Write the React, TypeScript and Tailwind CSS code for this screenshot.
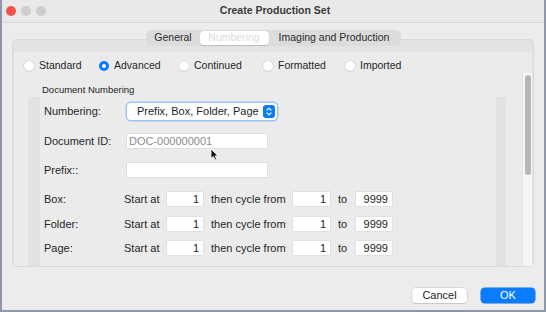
import { ReactNode } from "react"

function Radio({ label, checked, w }: { label: string; checked?: boolean; w?: string }) {
  return (
    <div className={`flex items-center gap-[5px] ${w ?? ""}`}>
      {checked ? (
        <div className="w-[10px] h-[10px] rounded-full bg-[#0a7bff] flex items-center justify-center">
          <div className="w-[4px] h-[4px] rounded-full bg-white" />
        </div>
      ) : (
        <div className="w-[10px] h-[10px] rounded-full bg-white shadow-[0_0_0_0.5px_#c8c8c8,0_0.5px_1px_rgba(0,0,0,0.15)]" />
      )}
      <span className="text-[10.5px] text-[#262626]">{label}</span>
    </div>
  )
}

function Field({ w, children, left }: { w: string; children?: ReactNode; left?: boolean }) {
  return (
    <div
      className={`${w} h-[14px] bg-white shadow-[0_0_0_0.5px_#d6d6d6] text-[11px] leading-[14px] text-[#222] ${
        left ? "pl-[2px] text-left" : "pr-[4px] text-right"
      }`}
    >
      {children}
    </div>
  )
}

function CycleRow({ label, mt }: { label: string; mt: string }) {
  return (
    <div className={`flex items-center h-[24px] ${mt}`}>
      <span className="w-[80px]">{label}</span>
      <span className="w-[43px]">Start at</span>
      <Field w="w-[36px]">1</Field>
      <span className="w-[90px] pl-[8px]">then cycle from</span>
      <Field w="w-[37px]">1</Field>
      <span className="w-[26px] pl-[8px]">to</span>
      <Field w="w-[36px]">9999</Field>
    </div>
  )
}

export default function App() {
  return (
    <div className="w-[546px] h-[312px] flex flex-col bg-[#ececec] border-x-2 border-b-2 border-[#8e96a7] overflow-hidden font-['Liberation_Sans',Arial,sans-serif] text-[#262626]">

      {/* title bar */}
      <div className="h-[23px] shrink-0 grid grid-cols-[1fr_auto_1fr] items-center border-b border-[#d6d6d6] bg-[#e9e9e9] pl-[4px]">
        <div className="flex items-center gap-[5px]">
          <div className="w-[10px] h-[10px] rounded-full bg-[#f0524c]" />
          <div className="w-[10px] h-[10px] rounded-full bg-[#cdcdcd]" />
          <div className="w-[10px] h-[10px] rounded-full bg-[#cdcdcd]" />
        </div>
        <div className="text-[10.5px] font-bold text-[#3a3a3a]">Create Production Set</div>
        <div />
      </div>

      {/* tabs */}
      <div className="relative z-10 mt-[7px] mx-auto flex items-center h-[16px] p-[1px] rounded-[5px] bg-[#dcdcdc] text-[10.5px]">
        <div className="w-[53px] flex justify-center text-[#2a2a2a]">General</div>
        <div className="w-[69px] h-[14px] flex items-center justify-center rounded-[4px] bg-white text-[#dcdcdc] shadow-[0_0.5px_1px_rgba(0,0,0,0.15)]">
          Numbering
        </div>
        <div className="w-[131px] flex justify-center text-[#2a2a2a]">Imaging and Production</div>
      </div>

      {/* tab box */}
      <div className="-mt-[7px] mx-[10px] h-[228px] shrink-0 flex flex-col rounded-[5px] border border-[#d9d9d9] bg-[#e3e3e3] pt-[12px] px-[1px]">
        <div className="flex-1 flex flex-col bg-[#ebebeb] min-h-0">

          <div className="flex items-center h-[14px] mt-[7px] pl-[10px]">
            <Radio label="Standard" w="w-[75px]" />
            <Radio label="Advanced" checked w="w-[80px]" />
            <Radio label="Continued" w="w-[84px]" />
            <Radio label="Formatted" w="w-[82px]" />
            <Radio label="Imported" />
          </div>

          {/* scroll view */}
          <div className="flex-1 flex min-h-0">
            <div className="flex-1 flex flex-col pt-[11px]">
              <div className="pl-[28px] h-[12px] leading-[12px] text-[9.5px] text-[#222]">Document Numbering</div>

              <div className="relative mt-[1px] ml-[14px] w-[478px] flex-1 flex">
                <div className="w-[12px] bg-[#e2e2e2]" />
                <div className="flex-1 flex flex-col pl-[4px] pt-[2px] text-[11px]">

                  <div className="flex items-center h-[24px]">
                    <span className="w-[83px]">Numbering:</span>
                    <div className="w-[150px] h-[17px] flex items-center justify-between rounded-[4px] bg-white shadow-[0_0_0_1.5px_#9ec2f2] pl-[10px] pr-[2px]">
                      <span>Prefix, Box, Folder, Page</span>
                      <div className="w-[12px] h-[13px] rounded-[3px] bg-[#0a7bff] flex items-center justify-center">
                        <svg width="6" height="9" viewBox="0 0 6 9" fill="none" stroke="white" strokeWidth="1.2" strokeLinecap="round" strokeLinejoin="round">
                          <path d="M1 3.2 L3 1.2 L5 3.2" />
                          <path d="M1 5.8 L3 7.8 L5 5.8" />
                        </svg>
                      </div>
                    </div>
                  </div>

                  <div className="flex items-center h-[24px] mt-[6px]">
                    <span className="w-[83px]">Document ID:</span>
                    <Field w="w-[140px]" left>
                      <span className="text-[#8c8c8c]">DOC-000000001</span>
                    </Field>
                  </div>

                  <div className="flex items-center h-[24px] mt-[5px]">
                    <span className="w-[83px]">Prefix::</span>
                    <Field w="w-[140px]" left />
                  </div>

                  <CycleRow label="Box:" mt="mt-[5px]" />
                  <CycleRow label="Folder:" mt="mt-[1px]" />
                  <CycleRow label="Page:" mt="mt-0" />
                </div>
                <div className="w-[10px] bg-[#e2e2e2]" />

                {/* mouse pointer */}
                <svg className="absolute left-[182px] top-[51px]" width="9" height="13" viewBox="0 0 9 13">
                  <path d="M1 1 L1 10.5 L3.3 8.4 L5 12 L6.6 11.3 L5 7.9 L8 7.9 Z" fill="#111" stroke="white" strokeWidth="0.8" />
                </svg>
              </div>
            </div>

            {/* scrollbar */}
            <div className="w-[10px] bg-[#f6f6f6] border-l border-[#e2e2e2] pt-[2px] flex justify-center">
              <div className="w-[6px] h-[100px] rounded-full bg-[#b6b6b6]" />
            </div>
          </div>
        </div>
      </div>

      {/* buttons */}
      <div className="mt-[21px] flex justify-end gap-[14px] pr-[9px] text-[11px]">
        <button className="w-[55px] h-[15px] leading-[15px] rounded-[4px] bg-white text-[#222] shadow-[0_0_0_0.5px_#c4c4c4,0_1px_1px_rgba(0,0,0,0.12)]">
          Cancel
        </button>
        <button className="w-[54px] h-[15px] leading-[15px] rounded-[4px] bg-[#0b7bff] text-white shadow-[0_0_0_0.5px_#0a6de0]">
          OK
        </button>
      </div>
    </div>
  )
}
